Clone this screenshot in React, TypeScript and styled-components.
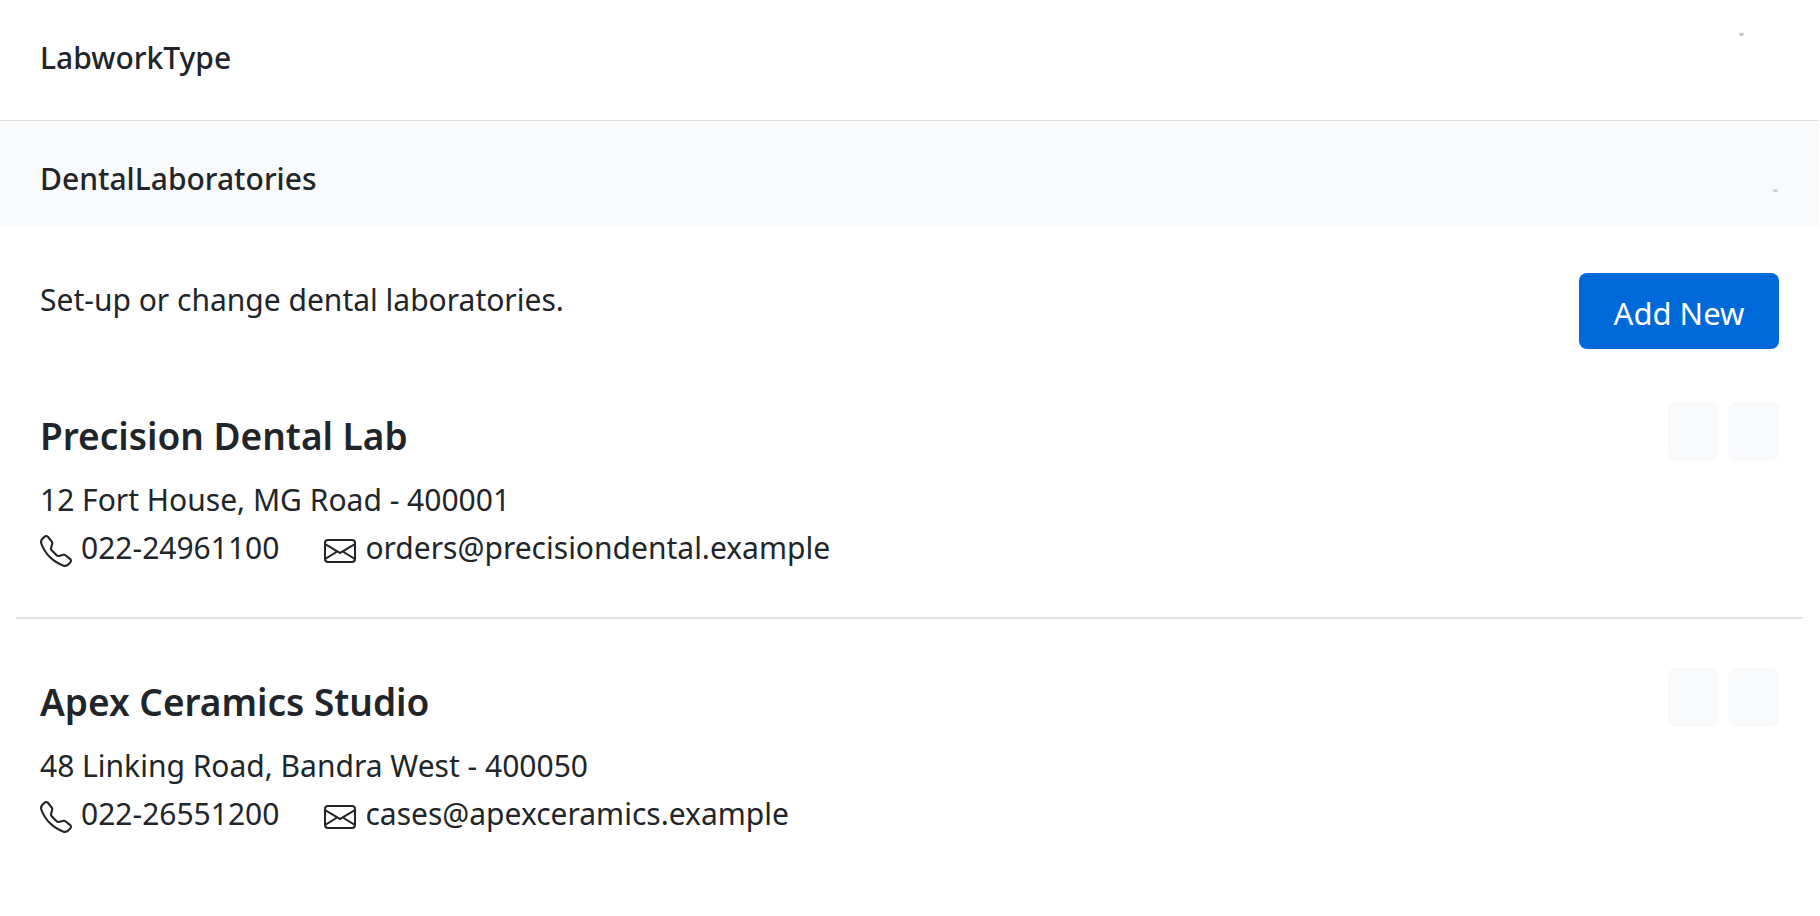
import React from 'react';
import styled, { createGlobalStyle } from 'styled-components';
import { BsTelephone, BsEnvelope } from 'react-icons/bs';

const GlobalStyle = createGlobalStyle`
  *, *::before, *::after { box-sizing: border-box; }
  body {
    margin: 0 1px 0 0;
    background: #fff;
    color: #212529;
    font-family: "Segoe UI", "Noto Sans", "Liberation Sans", sans-serif;
    font-size: 30px;
    line-height: 48px;
  }
`;

const SectionHeader = styled.header<{ $shaded?: boolean }>`
  display: flex;
  justify-content: space-between;
  align-items: center;
  min-height: ${p => (p.$shaded ? 105 : 121)}px;
  padding: ${p => (p.$shaded ? '11px 40px 0' : '0 40px 4px')};
  background: ${p => (p.$shaded ? '#f8f9fb' : '#fff')};
  border-bottom: ${p => (p.$shaded ? 'none' : '1px solid #dcdcdc')};
`;

const SectionTitle = styled.h2`
  margin: 0;
  font-size: 30px;
  line-height: 48px;
  font-weight: 500;
`;

const HeaderMark = styled.svg<{ $low?: boolean }>`
  width: 40px;
  height: 50px;
  fill: ${p => (p.$low ? '#c3d3e3' : '#c4c4c4')};
`;

const Intro = styled.div`
  display: flex;
  justify-content: space-between;
  align-items: flex-start;
  padding: 47px 40px 4px;
`;

const IntroText = styled.p`
  margin: 3px 0 0;
`;

const AddButton = styled.button`
  width: 200px;
  height: 76px;
  padding: 4px 0 0;
  border: 0;
  border-radius: 8px;
  background: #0069d9;
  color: #fff;
  font: inherit;
  font-size: 31px;
  cursor: pointer;
`;

const LabList = styled.ul`
  margin: 0 16px;
  padding: 0;
  list-style: none;
`;

const LabItem = styled.li`
  display: flex;
  justify-content: space-between;
  align-items: flex-start;
  padding: 49px 24px 45px;
  & + & { border-top: 2px solid #e1e3e5; }
`;

const LabName = styled.h3`
  margin: 6px 0 12px;
  font-size: 37px;
  line-height: 56px;
  font-weight: 600;
`;

const Address = styled.address`
  font-style: normal;
`;

const Contacts = styled.div`
  display: flex;
  gap: 45px;
`;

const Contact = styled.a`
  display: flex;
  align-items: center;
  gap: 9px;
  color: inherit;
  text-decoration: none;

  svg {
    width: 32px;
    height: 32px;
    margin-top: 5px;
  }
`;

const Actions = styled.div`
  display: flex;
  gap: 9px;
`;

const ActionButton = styled.button`
  width: 51px;
  height: 59px;
  padding: 0;
  border: 0;
  border-radius: 8px;
  background: #f8f9fb;
  cursor: pointer;
`;

const labs = [
  { name: 'Precision Dental Lab', address: '12 Fort House, MG Road - 400001', phone: '022-24961100', email: 'orders@precisiondental.example' },
  { name: 'Apex Ceramics Studio', address: '48 Linking Road, Bandra West - 400050', phone: '022-26551200', email: 'cases@apexceramics.example' },
];

export default function App() {
  return (
    <>
      <GlobalStyle />
      <SectionHeader>
        <SectionTitle>LabworkType</SectionTitle>
        <HeaderMark viewBox="0 0 40 50" aria-hidden="true"><path d="M0 0h5l-1 3h-3z" /></HeaderMark>
      </SectionHeader>
      <SectionHeader $shaded>
        <SectionTitle>DentalLaboratories</SectionTitle>
        <HeaderMark $low viewBox="0 0 40 50" aria-hidden="true"><path d="M34 38l1 -3h3l1 3z" /></HeaderMark>
      </SectionHeader>
      <main>
        <Intro>
          <IntroText>Set-up or change dental laboratories.</IntroText>
          <AddButton type="button">Add New</AddButton>
        </Intro>
        <LabList>
          {labs.map(lab => (
            <LabItem key={lab.name}>
              <div>
                <LabName>{lab.name}</LabName>
                <Address>{lab.address}</Address>
                <Contacts>
                  <Contact href={`tel:${lab.phone}`}><BsTelephone />{lab.phone}</Contact>
                  <Contact href={`mailto:${lab.email}`}><BsEnvelope />{lab.email}</Contact>
                </Contacts>
              </div>
              <Actions>
                <ActionButton type="button" aria-label="Edit" />
                <ActionButton type="button" aria-label="Delete" />
              </Actions>
            </LabItem>
          ))}
        </LabList>
      </main>
    </>
  );
}
